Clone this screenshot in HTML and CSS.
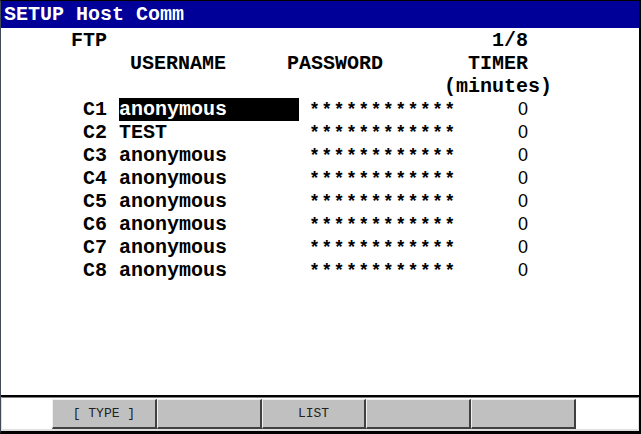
FILE: index.html
```html
<!DOCTYPE html>
<html lang="en">
<head>
    <meta charset="UTF-8">
    <title>SETUP Host Comm</title>
    <link rel="stylesheet" href="styles.css">
</head>
<body>
    <div class="screen">
        <div class="titlebar">SETUP Host Comm</div>

        <div class="content">
            <div class="line">
                <span class="ftp">FTP</span>
                <span class="right">1/8</span>
            </div>
            <div class="line">
                <span class="h-user">USERNAME</span>
                <span class="h-pass">PASSWORD</span>
                <span class="right">TIMER</span>
            </div>
            <div class="line">
                <span class="h-min">(minutes)</span>
            </div>

            <div class="line">
                <span class="lbl">C1</span>
                <span class="user selected">anonymous</span>
                <span class="pass">************</span>
                <span class="timer">0</span>
            </div>
            <div class="line">
                <span class="lbl">C2</span>
                <span class="user">TEST</span>
                <span class="pass">************</span>
                <span class="timer">0</span>
            </div>
            <div class="line">
                <span class="lbl">C3</span>
                <span class="user">anonymous</span>
                <span class="pass">************</span>
                <span class="timer">0</span>
            </div>
            <div class="line">
                <span class="lbl">C4</span>
                <span class="user">anonymous</span>
                <span class="pass">************</span>
                <span class="timer">0</span>
            </div>
            <div class="line">
                <span class="lbl">C5</span>
                <span class="user">anonymous</span>
                <span class="pass">************</span>
                <span class="timer">0</span>
            </div>
            <div class="line">
                <span class="lbl">C6</span>
                <span class="user">anonymous</span>
                <span class="pass">************</span>
                <span class="timer">0</span>
            </div>
            <div class="line">
                <span class="lbl">C7</span>
                <span class="user">anonymous</span>
                <span class="pass">************</span>
                <span class="timer">0</span>
            </div>
            <div class="line">
                <span class="lbl">C8</span>
                <span class="user">anonymous</span>
                <span class="pass">************</span>
                <span class="timer">0</span>
            </div>
        </div>

        <div class="fkeys">
            <div class="fkey-frame">
                <div class="fkey">[ TYPE ]</div>
                <div class="fkey"></div>
                <div class="fkey">LIST</div>
                <div class="fkey"></div>
                <div class="fkey"></div>
            </div>
        </div>
    </div>
</body>
</html>
```

FILE: styles.css
```css
body {
    margin: 0;
    background-color: #fff;
    overflow: hidden;
}

.screen {
    width: 641px;
    height: 434px;
    box-sizing: border-box;
    display: flex;
    flex-direction: column;
    border-top: 1px solid #000;
    border-left: 1px solid #404a54;
    border-right: 2px solid #000;
    border-bottom: 3px solid #000;
    background-color: #fff;
    font-family: 'Liberation Mono', 'Courier New', monospace;
    font-weight: bold;
    font-size: 20px;
}

.titlebar {
    height: 27px;
    line-height: 27px;
    padding-left: 3px;
    background-color: #000099;
    color: #fff;
    white-space: pre;
}

.content {
    flex: 1;
    padding-top: 1px;
    color: #000;
}

.line {
    display: flex;
    align-items: baseline;
    width: 527px;
    height: 23px;
    line-height: 23px;
    white-space: pre;
}

.right {
    margin-left: auto;
}

.ftp {
    margin-left: 70px;
}

.h-user {
    margin-left: 129px;
}

.h-pass {
    margin-left: 61px;
}

.h-min {
    margin-left: 443px;
}

.lbl {
    margin-left: 82px;
    width: 36px;
}

.user {
    width: 180px;
}

.selected {
    background-color: #000;
    color: #fff;
}

.pass {
    margin-left: 12px;
    width: 150px;
    font-family: 'Liberation Sans', Arial, sans-serif;
    font-size: 18px;
    letter-spacing: 5.3px;
}

.timer {
    margin-left: auto;
    font-family: 'Liberation Sans', Arial, sans-serif;
    font-weight: normal;
    font-size: 18px;
}

.fkeys {
    border-top: 2px solid #000;
}

.fkey-frame {
    display: flex;
    height: 30px;
    padding: 1px 62px 0 50px;
    border-top: 1px solid #808080;
    border-left: 1px solid #e0e0e0;
    border-right: 1px solid #e0e0e0;
    border-bottom: 2px solid #e0e0e0;
}

.fkey {
    flex: 1;
    display: flex;
    align-items: center;
    justify-content: center;
    background-color: #c0c0c0;
    border-top: 1px solid #f0f0f0;
    border-left: 1px solid #f0f0f0;
    border-right: 2px solid #404040;
    border-bottom: 2px solid #404040;
    font-size: 13px;
    font-weight: normal;
    color: #222;
    white-space: pre;
}
```
